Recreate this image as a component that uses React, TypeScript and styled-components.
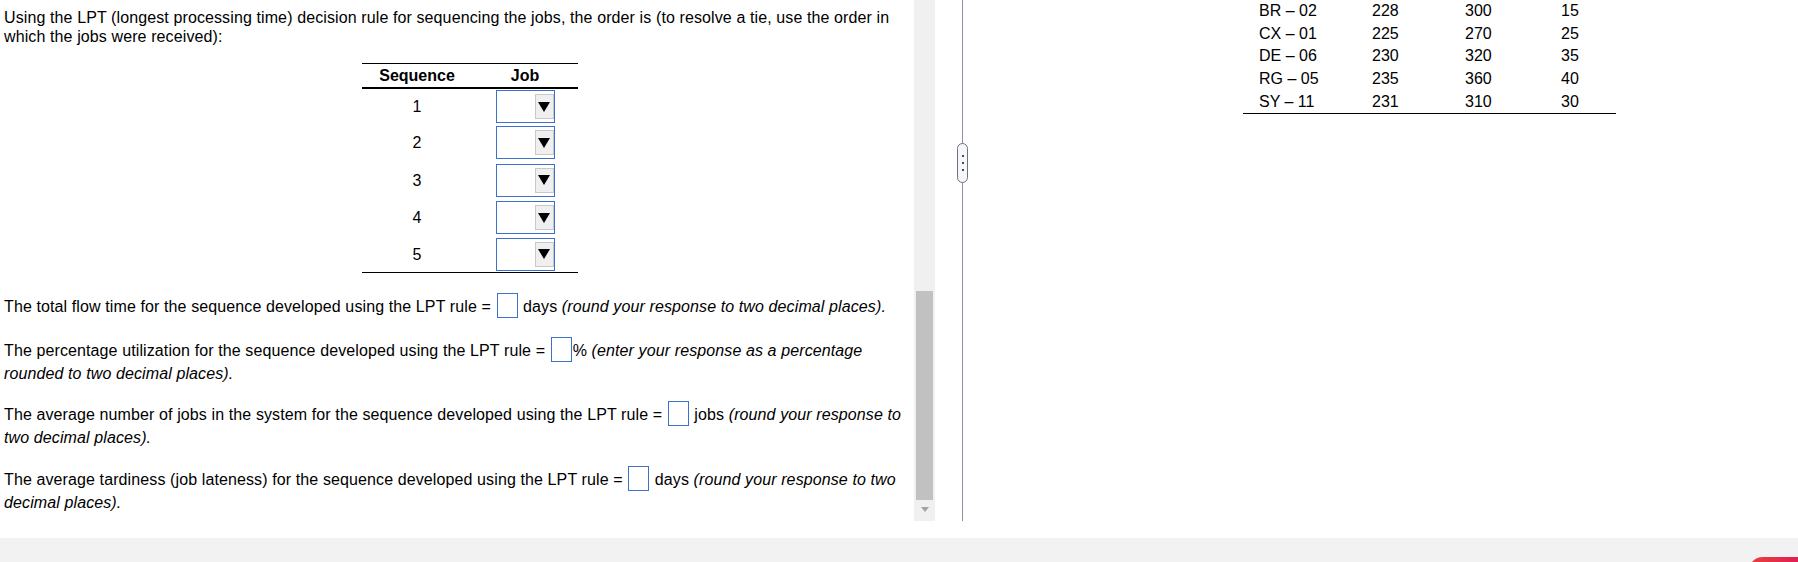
import React from "react";
import styled, { createGlobalStyle } from "styled-components";

const GlobalStyle = createGlobalStyle`
  html, body { margin: 0; padding: 0; background: #fff; }
  body {
    font-family: "Liberation Sans", Arial, sans-serif;
    font-size: 16px;
    color: #000;
  }
  * { box-sizing: border-box; }
`;

const Page = styled.div`
  width: 1798px;
  height: 562px;
  display: flex;
  flex-direction: column;
  overflow: hidden;
`;

const Workspace = styled.div`
  flex: 0 0 521px;
  height: 521px;
  display: flex;
`;

const QuestionPane = styled.div`
  flex: 0 0 914px;
  width: 914px;
  padding: 8px 0 0 4px;
  overflow: hidden;
  letter-spacing: 0.11px;
`;

const Intro = styled.p`
  margin: 0;
  line-height: 19px;
`;

const SequenceTable = styled.table`
  margin: 17px 0 0 358px;
  width: 216px;
  border-collapse: separate;
  border-spacing: 0;
  border-top: 1px solid #000;
  border-bottom: 1px solid #000;
  letter-spacing: 0;
`;

const HeadCell = styled.th<{ $w: number }>`
  width: ${(p) => p.$w}px;
  padding: 2px 0;
  line-height: 19px;
  font-weight: bold;
  text-align: center;
  border-bottom: 2px solid #000;
`;

const Cell = styled.td<{ $h: number }>`
  height: ${(p) => p.$h}px;
  padding: 0;
  line-height: 19px;
  text-align: center;
  vertical-align: middle;
`;

const JobSelect = styled.div`
  width: 59px;
  height: 33px;
  margin: 0 auto;
  border: 1px solid #3d6fcc;
  background: #fff;
  display: flex;
  justify-content: flex-end;
  align-items: flex-start;
  padding-top: 3px;
`;

const SelectButton = styled.span`
  width: 19px;
  height: 25px;
  background: #efefef;
  border: 1px solid #c8c8c8;
  display: flex;
  align-items: center;
  justify-content: center;
`;

const Prompt = styled.p<{ $gap: number }>`
  margin: ${(p) => p.$gap}px 0 0;
  line-height: 23.5px;
`;

const AnswerBox = styled.input`
  width: 21px;
  height: 25px;
  margin: 0 1px;
  padding: 0;
  border: 1px solid #3d6fcc;
  border-radius: 0;
  background: #fff;
  font: inherit;
  vertical-align: 1px;
  outline: none;
`;

const Note = styled.em`
  font-style: italic;
`;

const ScrollTrack = styled.div`
  flex: 0 0 21px;
  width: 21px;
  background: #f0f0f0;
  display: flex;
  flex-direction: column;
  align-items: center;
  padding-top: 291px;
`;

const ScrollThumb = styled.div`
  width: 17px;
  height: 209px;
  background: #c1c1c1;
`;

const ScrollArrow = styled.div`
  margin-top: 7px;
  width: 0;
  height: 0;
  border-left: 4px solid transparent;
  border-right: 4px solid transparent;
  border-top: 5px solid #a3a3a3;
`;

const Gutter = styled.div`
  flex: 0 0 22px;
`;

const Splitter = styled.div`
  flex: 0 0 11px;
  width: 11px;
  background: linear-gradient(
    to right,
    transparent 5px,
    #8e94a6 5px,
    #8e94a6 6px,
    transparent 6px
  );
`;

const SplitHandle = styled.div`
  margin-top: 143px;
  width: 11px;
  height: 40px;
  border: 1px solid #6d7283;
  border-radius: 6px;
  background: #f5f7fa;
  display: flex;
  flex-direction: column;
  align-items: center;
  justify-content: center;
  gap: 5px;
`;

const Dot = styled.span`
  width: 2px;
  height: 2px;
  background: #4a4a4a;
`;

const DataPane = styled.div`
  flex: 1;
  padding-left: 275px;
  overflow: hidden;
`;

const DataTable = styled.div`
  width: 373px;
  border-bottom: 1px solid #000;
`;

const DataRow = styled.div`
  display: grid;
  grid-template-columns: 113px 93px 96px 1fr;
  padding-left: 16px;
  height: 22.67px;
  line-height: 22.67px;
`;

const Footer = styled.div`
  flex: 0 0 24px;
  height: 24px;
  margin-top: 17px;
  background: #f2f2f2;
  display: flex;
  justify-content: flex-end;
  align-items: flex-start;
  overflow: hidden;
`;

const SubmitPill = styled.div`
  margin-top: 19px;
  width: 50px;
  height: 30px;
  border-radius: 15px 0 0 15px;
  background: linear-gradient(90deg, #e8423a, #e11f55);
`;

const rowHeights = [35, 37, 38, 37, 36];

const jobs = [
  ["BR – 02", "228", "300", "15"],
  ["CX – 01", "225", "270", "25"],
  ["DE – 06", "230", "320", "35"],
  ["RG – 05", "235", "360", "40"],
  ["SY – 11", "231", "310", "30"],
];

const Triangle = () => (
  <svg width="12" height="10" viewBox="0 0 12 10">
    <polygon points="0,0 12,0 6,10" fill="#000" />
  </svg>
);

export default function App() {
  return (
    <>
      <GlobalStyle />
      <Page>
        <Workspace>
          <QuestionPane>
            <Intro>
              Using the LPT (longest processing time) decision rule for sequencing the jobs, the
              order is (to resolve a tie, use the order in which the jobs were received):
            </Intro>
            <SequenceTable>
              <thead>
                <tr>
                  <HeadCell $w={110}>Sequence</HeadCell>
                  <HeadCell $w={106}>Job</HeadCell>
                </tr>
              </thead>
              <tbody>
                {rowHeights.map((h, i) => (
                  <tr key={i}>
                    <Cell $h={h}>{i + 1}</Cell>
                    <Cell $h={h}>
                      <JobSelect>
                        <SelectButton>
                          <Triangle />
                        </SelectButton>
                      </JobSelect>
                    </Cell>
                  </tr>
                ))}
              </tbody>
            </SequenceTable>
            <Prompt $gap={20}>
              The total flow time for the sequence developed using the LPT rule ={" "}
              <AnswerBox /> days <Note>(round your response to two decimal places).</Note>
            </Prompt>
            <Prompt $gap={19}>
              The percentage utilization for the sequence developed using the LPT rule ={" "}
              <AnswerBox />% <Note>(enter your response as a percentage rounded to two decimal places).</Note>
            </Prompt>
            <Prompt $gap={15}>
              The average number of jobs in the system for the sequence developed using the LPT rule ={" "}
              <AnswerBox /> jobs <Note>(round your response to two decimal places).</Note>
            </Prompt>
            <Prompt $gap={17}>
              The average tardiness (job lateness) for the sequence developed using the LPT rule ={" "}
              <AnswerBox /> days <Note>(round your response to two decimal places).</Note>
            </Prompt>
          </QuestionPane>
          <ScrollTrack>
            <ScrollThumb />
            <ScrollArrow />
          </ScrollTrack>
          <Gutter />
          <Splitter>
            <SplitHandle>
              <Dot />
              <Dot />
              <Dot />
            </SplitHandle>
          </Splitter>
          <DataPane>
            <DataTable>
              {jobs.map((r) => (
                <DataRow key={r[0]}>
                  {r.map((c, j) => (
                    <span key={j}>{c}</span>
                  ))}
                </DataRow>
              ))}
            </DataTable>
          </DataPane>
        </Workspace>
        <Footer>
          <SubmitPill />
        </Footer>
      </Page>
    </>
  );
}
